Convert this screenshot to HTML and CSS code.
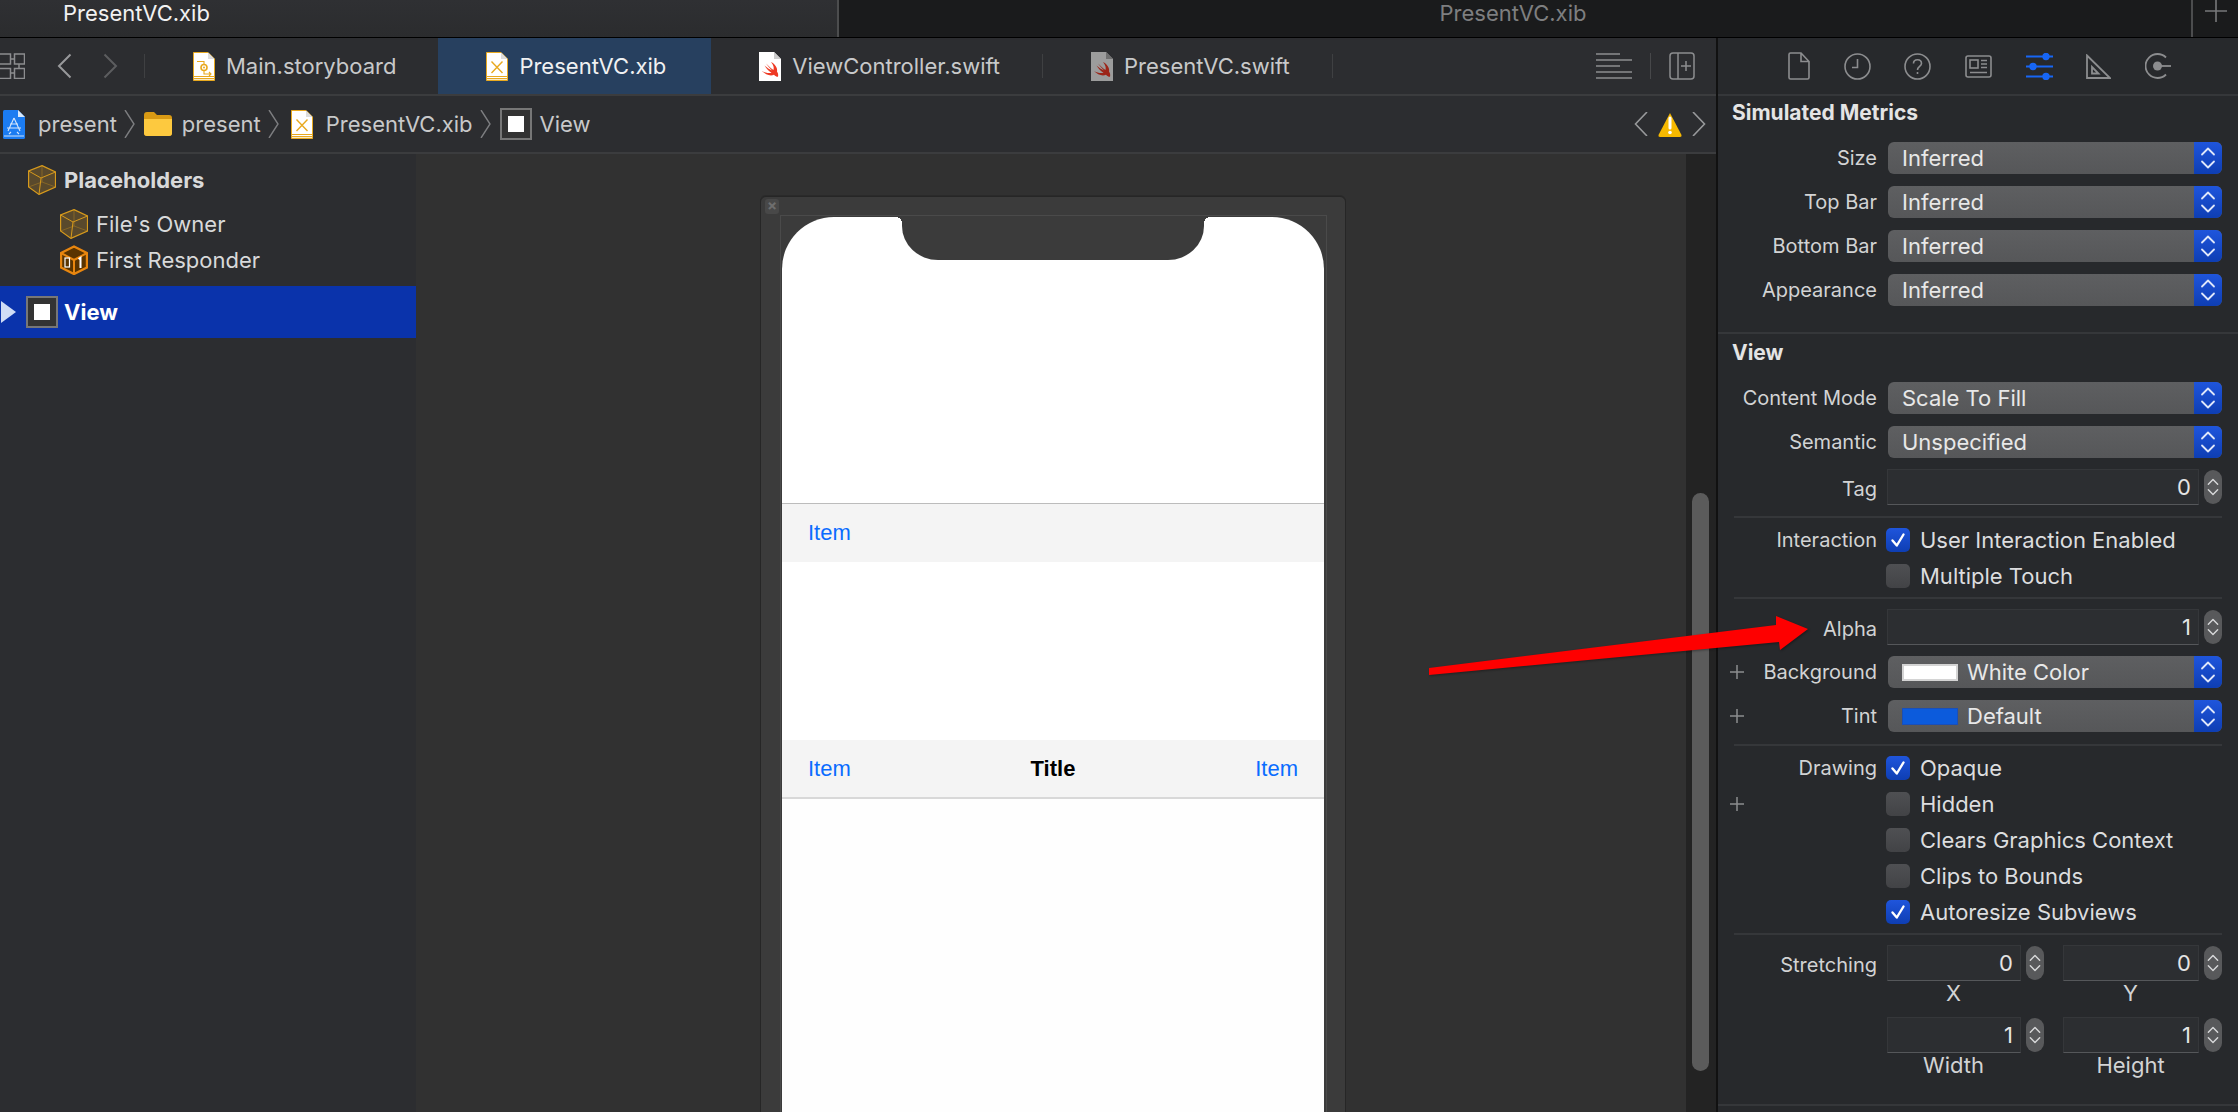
FILE: index.html
```html
<!DOCTYPE html>
<html lang="en">
<head>
    <meta charset="UTF-8">
    <title>PresentVC.xib</title>
    <link rel="stylesheet" href="styles.css">
</head>
<body>
    <svg class="defs" xmlns="http://www.w3.org/2000/svg">
        <symbol id="page-xib" viewBox="0 0 22 29">
            <path d="M.5.5H15L21.5 7V28.5H.5Z" fill="#fff" stroke="#e8a91f"/>
            <path d="M15 .5V7H21.5Z" fill="#ddd"/>
            <path d="M1 24.5H21M1 26.7H21" stroke="#e8a91f" stroke-width="1.2"/>
            <path d="M5.5 9.5L16.5 21M16.5 9.5L5.5 21" stroke="#e8a91f" stroke-width="1.4" fill="none"/>
        </symbol>
        <symbol id="page-storyboard" viewBox="0 0 22 29">
            <path d="M.5.5H15L21.5 7V28.5H.5Z" fill="#fff" stroke="#e8a91f"/>
            <path d="M15 .5V7H21.5Z" fill="#ddd"/>
            <path d="M1 24.5H21M1 26.7H21" stroke="#e8a91f" stroke-width="1.2"/>
            <path d="M4 9.5H11V12M11 19V22H18M16 20L18 22L16 24" stroke="#e8a91f" stroke-width="1.1" fill="none"/>
            <circle cx="11" cy="15.5" r="3" fill="none" stroke="#e8a91f" stroke-width="1.6"/>
            <circle cx="11" cy="15.5" r="1" fill="#e8a91f"/>
        </symbol>
        <symbol id="swift-bird" viewBox="0 0 22 29">
            <path d="M3 19C6.500 22.500 11 24.500 15 22.800C16.500 24.300 18 25 19 24.800C19.500 22.500 19 21 18 19.500C18.800 16 16 12 12 10C14.500 13 15.200 15.500 14.500 18C11.500 16 9 13.500 7 11.500C9 14 11 16.500 13 18.500C10.500 17.500 8 15.500 5.500 13.500C7.800 17 10 19.500 12.500 20.800C9.800 21.500 6.500 21 3 19Z"/>
        </symbol>
        <symbol id="page-app" viewBox="0 0 22 29">
            <path d="M0 1.500Q0 0 1.500 0H15L22 7V27.500Q22 29 20.500 29H1.500Q0 29 0 27.500Z" fill="#1b7cf2"/>
            <path d="M15 0V7H22Z" fill="#d8e8fb"/>
            <path d="M1 26H21" stroke="#cfe3fb" stroke-width="1"/>
            <path d="M11 8L5 21M11 8L17 21M4 18H18M7 14H15M8 22L6 24M14 22L16 24" stroke="#d5e6fc" stroke-width="1.100" fill="none"/>
        </symbol>
        <symbol id="cube" viewBox="0 0 28 30">
            <path d="M14 .6L27.500 7V22L11 29.400L.6 22V6Z" fill="#e0a020" fill-opacity=".25" stroke="#d79a1c" stroke-width="1.200"/>
            <path d="M.6 6L13 13L27.500 7M13 13L11 29.400" fill="none" stroke="#d79a1c" stroke-width="1"/>
            <path d="M14 .6V17M.6 22L14 17L27.500 22" fill="none" stroke="#d79a1c" stroke-width=".6" stroke-opacity=".6"/>
        </symbol>
        <symbol id="responder" viewBox="0 0 28 30">
            <path d="M14 1.500L27 8V22.500L14 29L1 22.500V8Z" fill="#5a3400" stroke="#e8860f" stroke-width="2.400" stroke-linejoin="round"/>
            <path d="M14 15L1 8M14 15L27 8M14 15V29" stroke="#e8860f" stroke-width="2" fill="none"/>
            <rect x="5" y="13" width="4.500" height="9" fill="none" stroke="#fff" stroke-width="1.200"/>
            <path d="M18.500 14L20.500 12.800V23" stroke="#fff" stroke-width="2" fill="none"/>
        </symbol>
        <symbol id="updown" viewBox="0 0 18 24">
            <path d="M3 8.500L9 2.500L15 8.500M3 15.500L9 21.500L15 15.500" fill="none" stroke="currentColor" stroke-width="1.800" stroke-linecap="round" stroke-linejoin="round"/>
        </symbol>
        <symbol id="tick" viewBox="0 0 24 24">
            <path d="M6.500 12.500L10.800 17.500L17.500 6.500" fill="none" stroke="#fff" stroke-width="2.400" stroke-linecap="round" stroke-linejoin="round"/>
        </symbol>
        <symbol id="plus" viewBox="0 0 14 14">
            <path d="M7 0V14M0 7H14" stroke="#8c8d8f" stroke-width="1.500"/>
        </symbol>
    </svg>

    <div class="titlebar">
        <div class="win-tab win-tab-active">PresentVC.xib</div>
        <div class="win-tab win-tab-other">PresentVC.xib</div>
        <div class="win-add">
            <svg width="22" height="22" viewBox="0 0 22 22"><path d="M11 0V22M0 11H22" stroke="#77787a" stroke-width="1.600"/></svg>
        </div>
    </div>

    <div class="main">
        <div class="editor">
            <div class="tabbar">
                <div class="tabbar-nav">
                    <svg class="nav-grid" width="25" height="26" viewBox="0 0 25 26" fill="none" stroke="#8c8d8f" stroke-width="1.500">
                        <path d="M0 1H10.500V11H0M14.500 1H24.500V11H14.500ZM0 15.500H10.500V25.500H0M14.500 15.500H24.500V25.500H14.500Z"/>
                        <path d="M10.500 6H14.500M10.500 20H14.500M19 11V15.500"/>
                    </svg>
                    <svg class="nav-back" width="15" height="26" viewBox="0 0 15 26"><path d="M13.500 1.500L2 13L13.500 24.500" fill="none" stroke="#98999b" stroke-width="2"/></svg>
                    <svg class="nav-forward" width="15" height="26" viewBox="0 0 15 26"><path d="M1.500 1.500L13 13L1.500 24.500" fill="none" stroke="#5c5d5f" stroke-width="2"/></svg>
                </div>
                <i class="tab-divider"></i>
                <div class="tab">
                    <svg class="file-icon"><use href="#page-storyboard"/></svg>
                    <span>Main.storyboard</span>
                </div>
                <div class="tab tab-active">
                    <svg class="file-icon"><use href="#page-xib"/></svg>
                    <span>PresentVC.xib</span>
                </div>
                <div class="tab tab-wide">
                    <svg class="file-icon" viewBox="0 0 22 29">
                        <path d="M0 0H15L22 7V29H0Z" fill="#fff"/><path d="M15 0V7H22Z" fill="#ccc"/>
                        <use href="#swift-bird" fill="#ee3a24"/>
                    </svg>
                    <span>ViewController.swift</span>
                </div>
                <i class="tab-divider"></i>
                <div class="tab">
                    <svg class="file-icon" viewBox="0 0 22 29">
                        <path d="M0 0H15L22 7V29H0Z" fill="#9c9c9c"/><path d="M15 0V7H22Z" fill="#6f6f6f"/>
                        <use href="#swift-bird" fill="#9c2418"/>
                    </svg>
                    <span>PresentVC.swift</span>
                </div>
                <i class="tab-divider"></i>
                <div class="tabbar-tools">
                    <svg width="36" height="26" viewBox="0 0 36 26"><path d="M0 1H24M0 7H36M0 13H24M0 19H36M0 25H36" stroke="#8c8d8f" stroke-width="1.600"/></svg>
                    <i class="tools-divider"></i>
                    <svg width="26" height="28" viewBox="0 0 26 28" fill="none" stroke="#8c8d8f" stroke-width="1.500"><rect x="1" y="1" width="24" height="26" rx="3"/><path d="M9 1V27M17 9V19M12 14H22"/></svg>
                </div>
            </div>

            <div class="jumpbar">
                <div class="crumb crumb-file"><svg class="file-icon"><use href="#page-app"/></svg><span>present</span></div>
                <svg class="crumb-sep" width="11" height="28" viewBox="0 0 11 28"><path d="M1 0L10 14L1 28" fill="none" stroke="#7d7e80" stroke-width="1.400"/></svg>
                <div class="crumb">
                    <svg class="folder-icon" width="28" height="24" viewBox="0 0 28 24"><path d="M0 3Q0 0 3 0H10L13 3H25Q28 3 28 6V21Q28 24 25 24H3Q0 24 0 21Z" fill="#d99a14"/><path d="M0 7H28V21Q28 24 25 24H3Q0 24 0 21Z" fill="#fdc93f"/></svg>
                    <span>present</span>
                </div>
                <svg class="crumb-sep" width="11" height="28" viewBox="0 0 11 28"><path d="M1 0L10 14L1 28" fill="none" stroke="#7d7e80" stroke-width="1.400"/></svg>
                <div class="crumb crumb-file"><svg class="file-icon"><use href="#page-xib"/></svg><span>PresentVC.xib</span></div>
                <svg class="crumb-sep" width="11" height="28" viewBox="0 0 11 28"><path d="M1 0L10 14L1 28" fill="none" stroke="#7d7e80" stroke-width="1.400"/></svg>
                <div class="crumb crumb-view"><div class="view-icon"></div><span>View</span></div>
                <div class="jump-issues">
                    <svg width="14" height="24" viewBox="0 0 14 24"><path d="M13 0L1.500 12L13 24" fill="none" stroke="#98999b" stroke-width="1.600"/></svg>
                    <svg width="24" height="25" viewBox="0 0 24 25"><path d="M12 1L23.500 23Q24 25 22 25H2Q0 25 .5 23Z" fill="#f7b900"/><path d="M12 6V16" stroke="#fff" stroke-width="3" stroke-linecap="round"/><circle cx="12" cy="20.500" r="1.800" fill="#fff"/></svg>
                    <svg width="14" height="24" viewBox="0 0 14 24"><path d="M1 0L12.500 12L1 24" fill="none" stroke="#98999b" stroke-width="1.600"/></svg>
                </div>
            </div>

            <div class="workspace">
                <div class="navigator">
                    <div class="nav-row nav-row-group">
                        <svg class="cube-icon"><use href="#cube"/></svg><b>Placeholders</b>
                    </div>
                    <div class="nav-row nav-row-child">
                        <svg class="cube-icon"><use href="#cube"/></svg><span>File's Owner</span>
                    </div>
                    <div class="nav-row nav-row-child">
                        <svg class="cube-icon"><use href="#responder"/></svg><span>First Responder</span>
                    </div>
                    <div class="nav-row nav-row-selected">
                        <i class="disclosure"></i><div class="view-icon"></div><b>View</b>
                    </div>
                </div>

                <div class="canvas">
                    <div class="device">
                        <div class="device-close">×</div>
                        <div class="device-inner">
                            <div class="screen">
                                <div class="notch"></div>
                                <div class="screen-top"></div>
                                <div class="bar bar-toolbar"><span class="bar-item">Item</span></div>
                                <div class="screen-gap"></div>
                                <div class="bar bar-nav">
                                    <span class="bar-item">Item</span>
                                    <span class="bar-title">Title</span>
                                    <span class="bar-item">Item</span>
                                </div>
                                <div class="screen-rest"></div>
                            </div>
                        </div>
                    </div>
                    <div class="scroll-gutter"><div class="scroll-thumb"></div></div>
                </div>
            </div>
        </div>

        <div class="inspector">
            <div class="inspector-tabs">
                <svg width="22" height="28" viewBox="0 0 22 28" fill="none" stroke="#8c8d8f" stroke-width="1.600"><path d="M1 2.500Q1 1 2.500 1H13L21 9.500V25.500Q21 27 19.500 27H2.500Q1 27 1 25.500ZM13 1V9.500H21"/></svg>
                <svg width="27" height="27" viewBox="0 0 27 27" fill="none" stroke="#8c8d8f" stroke-width="1.600"><circle cx="13.500" cy="13.500" r="12.500"/><path d="M13.500 6V14.500H8"/></svg>
                <svg width="27" height="27" viewBox="0 0 27 27" fill="none" stroke="#8c8d8f" stroke-width="1.600"><circle cx="13.500" cy="13.500" r="12.500"/><path d="M9.500 10.500C9.500 5.500 17.500 5.500 17.500 10.500C17.500 13.500 13.500 13.500 13.500 17"/><path d="M13.500 19V21"/></svg>
                <svg width="27" height="23" viewBox="0 0 27 23" fill="none" stroke="#8c8d8f" stroke-width="1.600"><rect x="1" y="1" width="25" height="21" rx="2"/><rect x="5" y="5" width="8" height="8"/><path d="M16 5.500H22M16 9H22M16 12.500H22M5 17.500H22"/></svg>
                <svg width="27" height="27" viewBox="0 0 27 27" fill="#1766f5" stroke="#1766f5" stroke-width="2.200"><path d="M0 3.500H27M0 13.500H27M0 23.500H27"/><circle cx="20" cy="3.500" r="2.600"/><circle cx="7" cy="13.500" r="2.600"/><circle cx="20" cy="23.500" r="2.600"/></svg>
                <svg width="25" height="25" viewBox="0 0 25 25" fill="none" stroke="#8c8d8f" stroke-width="1.800"><path d="M1 1.500L24 24H1ZM6 13L12.500 19.500H6Z"/></svg>
                <svg width="26" height="26" viewBox="0 0 26 26" fill="none" stroke="#8c8d8f" stroke-width="1.800"><path d="M21 4.500A12 12 0 1 0 21 21.500"/><circle cx="12.500" cy="13" r="4.500" fill="#8c8d8f" stroke="none"/><path d="M15 13H26"/></svg>
            </div>

            <div class="insp-section insp-metrics">
                <h4 class="insp-title">Simulated Metrics</h4>
                <div class="insp-rows">
                    <div class="row"><label class="row-label">Size</label><div class="popup"><span class="popup-value">Inferred</span><div class="popup-arrow"><svg><use href="#updown"/></svg></div></div></div>
                    <div class="row"><label class="row-label">Top Bar</label><div class="popup"><span class="popup-value">Inferred</span><div class="popup-arrow"><svg><use href="#updown"/></svg></div></div></div>
                    <div class="row"><label class="row-label">Bottom Bar</label><div class="popup"><span class="popup-value">Inferred</span><div class="popup-arrow"><svg><use href="#updown"/></svg></div></div></div>
                    <div class="row"><label class="row-label">Appearance</label><div class="popup"><span class="popup-value">Inferred</span><div class="popup-arrow"><svg><use href="#updown"/></svg></div></div></div>
                </div>
            </div>

            <div class="insp-section insp-view">
                <h4 class="insp-title">View</h4>
                <div class="insp-group group-mode">
                    <div class="row"><label class="row-label">Content Mode</label><div class="popup"><span class="popup-value">Scale To Fill</span><div class="popup-arrow"><svg><use href="#updown"/></svg></div></div></div>
                    <div class="row"><label class="row-label">Semantic</label><div class="popup"><span class="popup-value">Unspecified</span><div class="popup-arrow"><svg><use href="#updown"/></svg></div></div></div>
                    <div class="row row-field"><label class="row-label">Tag</label><div class="num"><div class="num-input">0</div><div class="stepper"><svg><use href="#updown"/></svg></div></div></div>
                </div>
                <div class="insp-group group-checks">
                    <div class="row row-check"><label class="row-label">Interaction</label><div class="check"><div class="box box-on"><svg><use href="#tick"/></svg></div><span>User Interaction Enabled</span></div></div>
                    <div class="row row-check"><label class="row-label"></label><div class="check"><div class="box"></div><span>Multiple Touch</span></div></div>
                </div>
                <div class="insp-group group-color">
                    <div class="row row-field"><label class="row-label">Alpha</label><div class="num"><div class="num-input">1</div><div class="stepper"><svg><use href="#updown"/></svg></div></div></div>
                    <div class="row"><label class="row-label"><svg class="plus"><use href="#plus"/></svg>Background</label><div class="popup"><i class="swatch swatch-white"></i><span class="popup-value">White Color</span><div class="popup-arrow"><svg><use href="#updown"/></svg></div></div></div>
                    <div class="row"><label class="row-label"><svg class="plus"><use href="#plus"/></svg>Tint</label><div class="popup"><i class="swatch swatch-blue"></i><span class="popup-value">Default</span><div class="popup-arrow"><svg><use href="#updown"/></svg></div></div></div>
                </div>
                <div class="insp-group group-checks">
                    <div class="row row-check"><label class="row-label">Drawing</label><div class="check"><div class="box box-on"><svg><use href="#tick"/></svg></div><span>Opaque</span></div></div>
                    <div class="row row-check"><label class="row-label"><svg class="plus"><use href="#plus"/></svg></label><div class="check"><div class="box"></div><span>Hidden</span></div></div>
                    <div class="row row-check"><label class="row-label"></label><div class="check"><div class="box"></div><span>Clears Graphics Context</span></div></div>
                    <div class="row row-check"><label class="row-label"></label><div class="check"><div class="box"></div><span>Clips to Bounds</span></div></div>
                    <div class="row row-check"><label class="row-label"></label><div class="check"><div class="box box-on"><svg><use href="#tick"/></svg></div><span>Autoresize Subviews</span></div></div>
                </div>
                <div class="insp-group group-stretch">
                    <div class="row row-field">
                        <label class="row-label">Stretching</label>
                        <div class="pair">
                            <div class="cell"><div class="num"><div class="num-input">0</div><div class="stepper"><svg><use href="#updown"/></svg></div></div><div class="caption">X</div></div>
                            <div class="cell"><div class="num"><div class="num-input">0</div><div class="stepper"><svg><use href="#updown"/></svg></div></div><div class="caption">Y</div></div>
                        </div>
                    </div>
                    <div class="row row-field">
                        <label class="row-label"></label>
                        <div class="pair">
                            <div class="cell"><div class="num"><div class="num-input">1</div><div class="stepper"><svg><use href="#updown"/></svg></div></div><div class="caption">Width</div></div>
                            <div class="cell"><div class="num"><div class="num-input">1</div><div class="stepper"><svg><use href="#updown"/></svg></div></div><div class="caption">Height</div></div>
                        </div>
                    </div>
                </div>
            </div>
        </div>
    </div>

    <svg class="arrow" width="382" height="62" viewBox="0 0 382 62">
        <path d="M0 52L347 9V0L379 13L351 34L350 26L0 59Z" fill="#fe0000"/>
    </svg>
</body>
</html>
```

FILE: styles.css
```css
* {
    margin: 0;
    padding: 0;
    box-sizing: border-box;
}

html, body {
    width: 2238px;
    height: 1112px;
    overflow: hidden;
}

body {
    position: relative;
    background-color: #27292c;
    color: #d8d9da;
    font-family: 'Inter', 'Liberation Sans', sans-serif;
    font-size: 22px;
}

.defs {
    display: none;
}

/* window title bar */
.titlebar {
    display: flex;
    height: 38px;
    background-color: #1a1b1c;
    border-bottom: 1px solid #000;
}

.win-tab {
    flex: 1;
    line-height: 26px;
    text-align: center;
    color: #7e7f80;
}

.win-tab-other {
    padding-right: 4px;
}

.win-tab-active {
    flex: 0 0 839px;
    padding-left: 63px;
    text-align: left;
    color: #f2f2f2;
    background: linear-gradient(#2f3033, #2b2c2e);
    border-right: 2px solid #4c4d4e;
}

.win-add {
    flex: 0 0 47px;
    display: flex;
    justify-content: center;
    border-left: 2px solid #4c4d4e;
}

.main {
    display: flex;
    height: 1074px;
}

.editor {
    flex: 0 0 1718px;
    display: flex;
    flex-direction: column;
    border-right: 2px solid #111;
}

/* tab bar */
.tabbar {
    display: flex;
    flex: 0 0 58px;
    background-color: #2c2d30;
    border-bottom: 2px solid #3b3c3e;
}

.tabbar-nav {
    flex: 0 0 144px;
    display: flex;
    align-items: center;
}

.nav-back {
    margin-left: 32px;
}

.nav-forward {
    margin-left: 31px;
}

.tab-divider {
    flex: none;
    align-self: center;
    width: 1px;
    height: 24px;
    background-color: #3f4042;
}

.tab {
    display: flex;
    align-items: center;
    gap: 11px;
    padding: 0 42px 0 48px;
    color: #c8c9ca;
}

.tab-active {
    padding-right: 45px;
    background-color: #27405f;
    color: #f0f1f2;
}

.tab-wide {
    padding-right: 42px;
}

.file-icon {
    flex: none;
    width: 22px;
    height: 29px;
}

.tabbar-tools {
    margin-left: auto;
    display: flex;
    align-items: center;
    padding-right: 21px;
}

.tools-divider {
    width: 1px;
    height: 26px;
    margin: 0 18px;
    background-color: #47484a;
}

/* jump bar */
.jumpbar {
    display: flex;
    flex: 0 0 58px;
    align-items: center;
    padding-left: 3px;
    background-color: #2c2d30;
    border-bottom: 2px solid #3b3c3e;
    color: #c8c9ca;
}

.crumb {
    display: flex;
    align-items: center;
    gap: 10px;
}

.crumb-file {
    gap: 13px;
}

.crumb-sep {
    margin: 0 9px 0 7px;
}

.crumb-sep + .crumb-file {
    margin-left: 3px;
}

.crumb-view {
    gap: 8px;
}

.view-icon {
    flex: none;
    width: 32px;
    height: 32px;
    border: 2px solid #777;
    background-color: #333;
    display: flex;
    align-items: center;
    justify-content: center;
}

.view-icon::before {
    content: '';
    width: 16px;
    height: 16px;
    background-color: #fff;
}

.jump-issues {
    margin-left: auto;
    display: flex;
    align-items: center;
    gap: 10px;
    padding-right: 10px;
}

/* navigator and canvas */
.workspace {
    flex: 1;
    display: flex;
    min-height: 0;
}

.navigator {
    flex: 0 0 416px;
    background-color: #2c2d30;
    padding-top: 11px;
}

.nav-row {
    display: flex;
    align-items: center;
    color: #d8d9da;
}

.cube-icon {
    flex: none;
    width: 28px;
    height: 30px;
}

.nav-row-group {
    height: 30px;
    gap: 8px;
    padding-left: 28px;
    margin-bottom: 14px;
}

.nav-row-child {
    height: 30px;
    gap: 8px;
    padding-left: 60px;
    margin-bottom: 6px;
}

.nav-row-selected {
    height: 52px;
    margin-top: 11px;
    background-color: #0a33ab;
    color: #fff;
}

.disclosure {
    width: 0;
    height: 0;
    margin: 0 10px 0 1px;
    border-left: 15px solid #cfdcf5;
    border-top: 11px solid transparent;
    border-bottom: 11px solid transparent;
}

.nav-row-selected b {
    margin-left: 6px;
}

.canvas {
    flex: 1;
    display: flex;
    justify-content: space-between;
    align-items: flex-start;
    background-color: #313131;
    padding-left: 344px;
    overflow: hidden;
}

.device {
    position: relative;
    flex: 0 0 586px;
    height: 1000px;
    margin-top: 42px;
    padding: 18px 18px 0 19px;
    background-color: #3b3b3b;
    border: 1px solid #262626;
    border-radius: 6px 6px 0 0;
    box-shadow: 0 -1px 0 #2a2a2a;
}

.device-close {
    position: absolute;
    left: 4px;
    top: 2px;
    width: 14px;
    height: 15px;
    border-radius: 3px;
    background-color: #484848;
    color: #6e6e6e;
    font-size: 15px;
    font-weight: 700;
    line-height: 14px;
    text-align: center;
}

.device-inner {
    height: 100%;
    border: 1px solid #4a4a4a;
    border-bottom: none;
    padding: 1px 2px 0 1px;
}

.screen {
    position: relative;
    display: flex;
    flex-direction: column;
    height: 100%;
    background-color: #fff;
    border-radius: 52px 52px 0 0;
    font-family: 'Liberation Sans', sans-serif;
    font-size: 22px;
}

.notch {
    position: absolute;
    left: 120px;
    top: 0;
    width: 302px;
    height: 43px;
    background-color: #3b3b3b;
    border-radius: 0 0 36px 36px / 0 0 34px 34px;
}

.notch::before,
.notch::after {
    content: '';
    position: absolute;
    top: 0;
    width: 6px;
    height: 6px;
}

.notch::before {
    left: -6px;
    background: radial-gradient(circle at 0 100%, transparent 6px, #3b3b3b 6px);
}

.notch::after {
    right: -6px;
    background: radial-gradient(circle at 100% 100%, transparent 6px, #3b3b3b 6px);
}

.screen-top {
    flex: 0 0 286px;
}

.screen-gap {
    flex: 0 0 178px;
}

.screen-rest {
    flex: 1;
    background-color: #fefefe;
}

.bar {
    display: flex;
    align-items: center;
    justify-content: space-between;
    padding: 0 26px;
    background-color: #f4f4f4;
}

.bar-toolbar {
    flex: 0 0 59px;
    border-top: 1px solid #bcbcbc;
}

.bar-nav {
    flex: 0 0 59px;
    border-bottom: 2px solid #d8d8d8;
}

.bar-item {
    color: #0a6cff;
}

.bar-title {
    color: #000;
    font-weight: 700;
}

.scroll-gutter {
    flex: 0 0 30px;
    height: 100%;
    background-color: #232323;
    padding: 339px 7px 0 6px;
}

.scroll-thumb {
    height: 578px;
    border-radius: 9px;
    background-color: #5b5b5b;
}

/* inspector */
.inspector {
    flex: 1;
    background-color: #27292c;
}

.inspector-tabs {
    display: flex;
    height: 58px;
    align-items: center;
    justify-content: space-between;
    padding: 0 67px 0 70px;
    border-bottom: 2px solid #35373a;
}

.insp-title {
    height: 34px;
    padding-left: 14px;
    font-size: 21px;
    font-weight: 700;
    line-height: 34px;
    color: #e4e4e4;
}

.insp-section {
    border-bottom: 2px solid #35373a;
}

.insp-metrics {
    padding-bottom: 26px;
}

.insp-metrics .insp-title {
    margin-bottom: 12px;
}

.insp-rows,
.insp-group {
    display: flex;
    flex-direction: column;
    gap: 12px;
}

.insp-view {
    height: 772px;
}

.insp-view .insp-title {
    height: 38px;
    line-height: 38px;
    margin-bottom: 10px;
}

.insp-group {
    margin-left: 16px;
    margin-right: 16px;
    padding-top: 10px;
    padding-bottom: 9px;
    border-bottom: 2px solid #35373a;
}

.insp-group:last-child {
    border-bottom: none;
}

.group-mode {
    padding-top: 0;
    padding-bottom: 11px;
}

.group-color {
    padding-bottom: 12px;
}

.row {
    display: grid;
    grid-template-columns: 143px 1fr;
    column-gap: 11px;
    align-items: center;
    min-height: 32px;
}

.insp-rows .row {
    grid-template-columns: 159px 1fr;
    padding-right: 16px;
}

.row-check {
    min-height: 24px;
}

.row-field {
    align-items: start;
    column-gap: 10px;
}

/* number fields sit a pixel closer to the popups around them */
.group-mode .row-field,
.group-color .row-field + .row {
    margin-top: -1px;
}

.row-label {
    display: flex;
    justify-content: flex-end;
    min-height: 24px;
    align-items: center;
    font-size: 20px;
    color: #d2d3d4;
}

.row-field > .row-label {
    height: 36px;
    padding-top: 3px;
}

.plus {
    flex: none;
    width: 14px;
    height: 14px;
    margin-left: -4px;
    margin-right: auto;
}

.popup {
    display: flex;
    align-items: center;
    height: 32px;
    padding-left: 14px;
    border-radius: 6px;
    background: linear-gradient(#5e5f61, #565759);
    color: #e8e8e8;
    overflow: hidden;
}

.popup-value {
    flex: 1;
}

.popup-arrow {
    flex: 0 0 28px;
    align-self: stretch;
    display: flex;
    align-items: center;
    justify-content: center;
    background: linear-gradient(#1f55dc, #0e3eb3);
    color: #dfe7fa;
}

.popup-arrow svg {
    width: 18px;
    height: 24px;
}

.swatch {
    flex: none;
    width: 56px;
    height: 17px;
    margin-right: 9px;
}

.swatch-white {
    background-color: #fff;
    border: 2px solid #d4d4d4;
}

.swatch-blue {
    background-color: #0c5bdc;
    border: 1px solid #1a4fb8;
}

.num {
    display: flex;
    gap: 5px;
}

.num-input {
    flex: 1;
    height: 36px;
    padding-right: 7px;
    background-color: #2c2e31;
    border: 1px solid #35373a;
    border-bottom-color: #55575a;
    color: #e4e4e4;
    line-height: 34px;
    text-align: right;
}

.stepper {
    flex: 0 0 18px;
    display: flex;
    align-items: center;
    justify-content: center;
    height: 34px;
    margin-top: 1px;
    border-radius: 9px;
    background-color: #58595b;
    color: #d8d9da;
}

.stepper svg {
    width: 14px;
    height: 24px;
}

.check {
    display: flex;
    align-items: center;
    gap: 10px;
    height: 24px;
    margin-left: -2px;
    line-height: 24px;
    color: #dcdddf;
}

.box {
    flex: none;
    width: 24px;
    height: 24px;
    border-radius: 5px;
    background: linear-gradient(#4f5053, #424346);
}

.box-on {
    background: linear-gradient(#1f55dc, #0e3eb3);
}

.box svg {
    display: block;
    width: 24px;
    height: 24px;
}

.pair {
    display: flex;
    gap: 19px;
}

.cell {
    flex: 1;
}

.cell:first-child {
    flex: 0 0 157px;
}

.caption {
    height: 24px;
    line-height: 24px;
    text-align: center;
    padding-right: 24px;
    color: #d2d3d4;
}

.arrow {
    position: absolute;
    left: 1429px;
    top: 616px;
    filter: drop-shadow(1px 1px 1px rgba(0, 0, 0, 0.35));
}
```
